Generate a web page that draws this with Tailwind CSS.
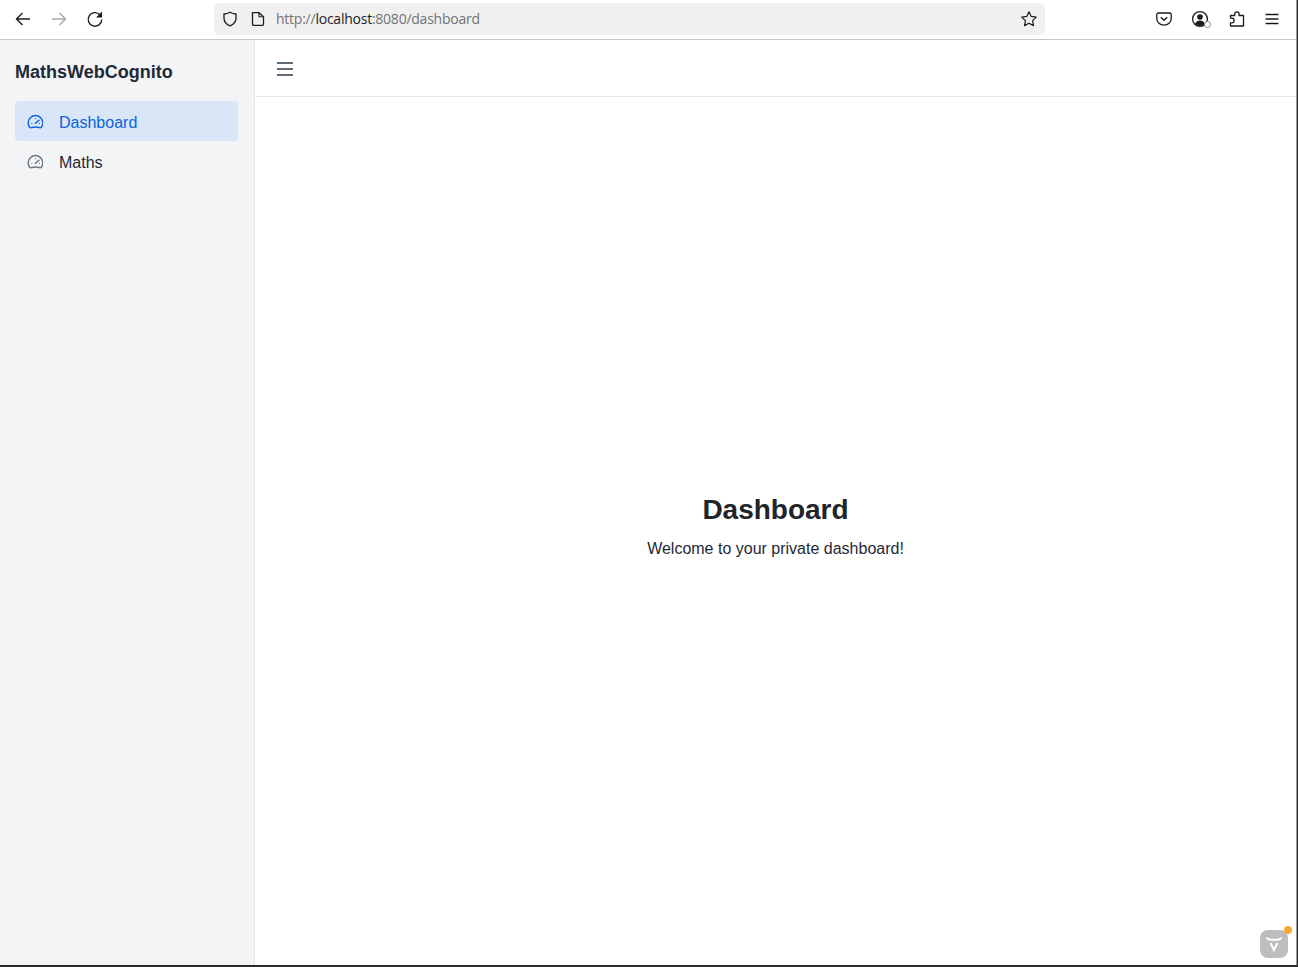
<!DOCTYPE html>
<html lang="en">
<head>
  <meta charset="UTF-8">
  <title>MathsWebCognito</title>
  <script src="https://cdn.jsdelivr.net/npm/@tailwindcss/browser@4"></script>
</head>
<body class="bg-[#2b2b2b] h-[967px] overflow-hidden font-['Liberation_Sans',sans-serif]">
  <div class="w-[1297px] h-[965px] bg-white flex flex-col relative border-r border-[#9a9a9a]">
    <!-- browser toolbar -->
    <div class="h-10 pb-[2px] flex items-center shrink-0 border-b border-[#c8c8c8] bg-white">
      <div class="w-[214px] pl-[14px] flex items-center gap-[18px] shrink-0">
        <svg class="w-[18px] h-[18px] text-[#1c1b22]" viewBox="0 0 18 18" fill="none" stroke="currentColor" stroke-width="1.4"><path d="M16 9H2.500M8.500 3L2.500 9l6 6"/></svg>
        <svg class="w-[18px] h-[18px] text-[#a9a9ab]" viewBox="0 0 18 18" fill="none" stroke="currentColor" stroke-width="1.4"><path d="M2 9h13.500M9.500 3l6 6-6 6"/></svg>
        <svg class="w-[18px] h-[18px] text-[#1c1b22]" viewBox="0 0 18 18" fill="none" stroke="currentColor" stroke-width="1.4"><path d="M14.200 5A6.800 6.800 0 1 0 15.800 9.500"/><path d="M16 1.500v6h-6z" fill="currentColor" stroke="none"/></svg>
      </div>
      <div class="w-[831px] h-8 rounded-[5px] bg-[#f0f0f1] flex items-center shrink-0 pl-2 pr-[7px]">
        <svg class="w-4 h-4 text-[#1c1b22] shrink-0" viewBox="0 0 16 16" fill="none" stroke="currentColor" stroke-width="1.3"><path d="M8 1.200c2 1.200 4 1.700 6 1.800v4.200c0 3.600-2.600 6.200-6 7.600-3.400-1.400-6-4-6-7.600V3c2-.1 4-.6 6-1.800z"/></svg>
        <svg class="w-4 h-4 ml-3 text-[#1c1b22] shrink-0" viewBox="0 0 16 16" fill="none" stroke="currentColor" stroke-width="1.3"><path d="M2.500 1.700h6.500l4.500 4v7.500a1.200 1.200 0 0 1-1.200 1.200H3.700a1.200 1.200 0 0 1-1.200-1.200z"/><path d="M9 1.700v4h4.500" stroke-width="1.100"/></svg>
        <div class="ml-[10px] text-[14px] leading-none text-[#737378] font-['Open_Sans',sans-serif] font-normal tracking-[-0.24px] whitespace-nowrap">http://<span class="text-[#1c1b22]">localhost</span>:8080/dashboard</div>
        <svg class="w-[18px] h-[18px] ml-auto text-[#1c1b22] shrink-0" viewBox="0 0 18 18" fill="none" stroke="currentColor" stroke-width="1.200"><path d="M9 1.800l2.200 4.600 5 .7-3.600 3.500.9 5L9 13.200l-4.500 2.400.9-5L1.800 7.100l5-.7z" stroke-linejoin="round"/></svg>
      </div>
      <div class="flex-1 flex items-center justify-end pr-[15px] gap-[18px]">
        <svg class="w-[18px] h-[18px] text-[#1c1b22]" viewBox="0 0 18 18" fill="none" stroke="currentColor" stroke-width="1.300"><path d="M3.200 3h11.600c.8 0 1.400.6 1.400 1.400v4.100c0 3.900-3.200 6.700-7.200 6.700s-7.200-2.800-7.200-6.700V4.400C1.800 3.600 2.400 3 3.200 3z"/><path d="M5.800 7.200L9 10.300l3.200-3.100" stroke-width="1.500"/></svg>
        <div class="relative w-[18px] h-[18px]">
          <svg class="w-[18px] h-[18px] text-[#1c1b22]" viewBox="0 0 18 18" fill="none" stroke="currentColor" stroke-width="1.300"><circle cx="9" cy="9" r="7.400"/><circle cx="9" cy="7" r="2.800" fill="currentColor" stroke="none"/><path d="M4 14c1-2.600 3-3.400 5-3.400s4 .8 5 3.400c-1.400 1.300-3 2-5 2s-3.600-.7-5-2z" fill="currentColor" stroke="none"/></svg>
          <div class="absolute right-[-2px] bottom-0 w-[7px] h-[7px] rounded-full bg-white border border-[#8f8f8f]"></div>
        </div>
        <svg class="w-[18px] h-[18px] text-[#1c1b22]" viewBox="0 0 18 18" fill="none" stroke="currentColor" stroke-width="1.300" stroke-linejoin="round"><path d="M3.500 5.500h4.200V4a2.200 2.200 0 0 1 4.400 0v1.500h4.400V16H3.500v-3.200h1.300a2.300 2.300 0 0 0 0-4.600H3.500z"/></svg>
        <svg class="w-[18px] h-[18px] text-[#1c1b22]" viewBox="0 0 18 18" fill="none" stroke="currentColor" stroke-width="1.300"><path d="M2.500 4.500h13M2.500 9h13M2.500 13.500h13"/></svg>
      </div>
    </div>

    <!-- app -->
    <div class="flex-1 flex min-h-0">
      <aside class="w-[255px] shrink-0 bg-[#f3f4f6] border-r border-[#e5e7eb] px-[15px] pt-[21px]">
        <div class="text-[18px] leading-[22px] font-bold text-[#1f2937]">MathsWebCognito</div>
        <nav class="mt-[18px] w-[223px] flex flex-col">
          <a class="h-10 rounded-[4px] bg-[#d9e6f8] flex items-center pl-3 text-[#0a62e0] text-base">
            <svg class="w-4 h-4 shrink-0" viewBox="-0.5 -1 16 16" fill="none" stroke="currentColor"><path d="M2.200 13.300A7.300 7.300 0 1 1 13.800 13.300c-.5.500-1.200.6-1.800.4C10.700 13.300 9.400 13 8 13s-2.700.3-4 .7c-.6.200-1.300.1-1.800-.4z" stroke-width="1.400"/><path d="M8 9.200l3.400-3" stroke-width="1.500" stroke-linecap="round"/><path d="M8 4.200v1M3.800 9.500h1M11.500 9.500h1" stroke-width="1"/></svg>
            <span class="ml-4 pt-1">Dashboard</span>
          </a>
          <a class="h-10 flex items-center pl-3 text-[#1f2937] text-base">
            <svg class="w-4 h-4 shrink-0 text-[#6b7280]" viewBox="-0.5 -1 16 16" fill="none" stroke="currentColor"><path d="M2.200 13.300A7.300 7.300 0 1 1 13.800 13.300c-.5.500-1.200.6-1.800.4C10.700 13.300 9.400 13 8 13s-2.700.3-4 .7c-.6.200-1.300.1-1.800-.4z" stroke-width="1.400"/><path d="M8 9.200l3.400-3" stroke-width="1.500" stroke-linecap="round"/><path d="M8 4.200v1M3.800 9.500h1M11.500 9.500h1" stroke-width="1"/></svg>
            <span class="ml-4 pt-1">Maths</span>
          </a>
        </nav>
      </aside>
      <main class="flex-1 flex flex-col min-w-0">
        <div class="h-[57px] shrink-0 border-b border-[#e5e7eb] flex items-center pl-[20px]">
          <svg class="w-5 h-5 mt-[2px] text-[#5f6b7a]" viewBox="0 0 20 20" fill="none" stroke="currentColor" stroke-width="2.200"><path d="M2 4h16M2 10h16M2 16h16"/></svg>
        </div>
        <div class="flex-1 flex flex-col items-center justify-center text-center pb-[9px]">
          <h1 class="text-[28px] leading-[34px] font-bold text-[#212529]">Dashboard</h1>
          <p class="mt-[10px] text-base leading-6 text-[#1f2937]">Welcome to your private dashboard!</p>
        </div>
      </main>
    </div>

    <!-- floating extension badge -->
    <div class="absolute right-[8px] bottom-[7px] w-7 h-7 rounded-lg bg-[#bdbdbd] flex items-center justify-center">
      <svg class="w-[18px] h-[18px] text-white" viewBox="0 0 18 18" fill="none" stroke="currentColor" stroke-width="2"><path d="M1.500 2.500c1 1.800 2.500 2.300 4 2.300h7c1.500 0 3-.5 4-2.300"/><path d="M5.500 8L9 15l3.500-7"/></svg>
      <div class="absolute right-[-4px] top-[-4px] w-2 h-2 rounded-full bg-[#f5a833]"></div>
    </div>
  </div>
</body>
</html>
